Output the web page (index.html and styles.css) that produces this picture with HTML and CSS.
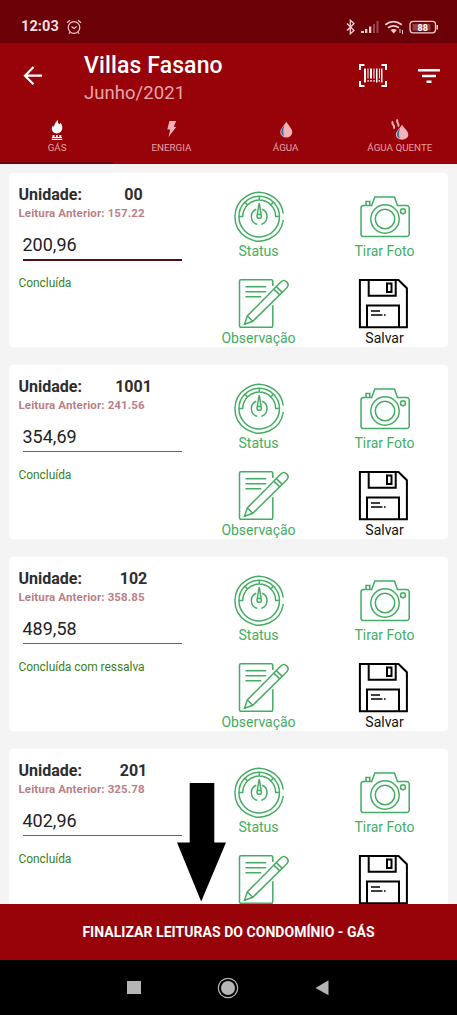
FILE: index.html
```html
<!DOCTYPE html>
<html lang="pt-BR">
<head>
<meta charset="utf-8">
<title>Villas Fasano</title>
<link rel="stylesheet" href="styles.css">
</head>
<body>
<svg class="defs" aria-hidden="true">
  <symbol id="gauge" viewBox="0 0 64 51">
    <path d="M56.300 22.500A24.300 24.300 0 1 0 56.300 29"/>
    <circle cx="32.200" cy="25.600" r="20.300"/>
    <path d="M12 25.600h3.700a16.500 16.500 0 0 1 33 0h3.700M32.200 5.500v3.600M17.900 11.300l2.600 2.600M46.500 11.300l-2.600 2.600"/>
    <path d="M29.300 18.300a8 8 0 0 0 1 15.100M35.100 18.300a8 8 0 0 1-1 15.100"/>
    <path d="M32.200 12l-2.100 12.500a2.200 2.200 0 1 0 4.200 0zM30 23.500h4.400"/>
  </symbol>
  <symbol id="camera" viewBox="0 0 64 51">
    <path d="M10.500 14.500h8.200L21.800 6h19.700l3 8.500h9.200a2.500 2.500 0 0 1 2.500 2.500v26a2.500 2.500 0 0 1-2.500 2.500H10.500A2.500 2.500 0 0 1 8 43V17a2.500 2.500 0 0 1 2.500-2.500zM13 14.500v-4h3.800v4"/>
    <circle cx="32" cy="28" r="14.200"/><circle cx="32" cy="28" r="9.700"/><circle cx="50" cy="20.200" r="2.500"/>
  </symbol>
  <symbol id="note" viewBox="0 0 64 51">
    <path d="M45.800 8V3.300a1.500 1.500 0 0 0-1.500-1.500H14a1.500 1.500 0 0 0-1.500 1.500v44.500a1.500 1.500 0 0 0 1.500 1.500h30.300a1.500 1.500 0 0 0 1.500-1.500V27.300M18.500 8.700h20.700M18.500 13.700h20.700M18.500 18.700h15.700"/>
    <path d="M17.500 46.300l2.800-8.300L53.800 4c3.800-3.800 9.800 1.500 6 5.800L25.800 43.300zM20.300 38l5.500 5.300M49.300 8.600l5.900 5.800M46.800 11.100l5.900 5.800"/>
  </symbol>
  <symbol id="floppy" viewBox="0 0 64 51">
    <path d="M6.900 2h38.600l8.400 8.200v39H6.900zM15.700 2v15.800h27V2M34 5.600h4.500v8.300H34zM14 49V27.600h32V49"/>
    <path d="M18 32.900h9M18 37h11.500M31 37h1.600" stroke-width="1.500"/>
  </symbol>
</svg>
<div class="phone">
  <div class="status-bar">
    <span class="clock">12:03</span>
    <svg class="alarm" viewBox="0 0 16 16"><circle cx="8" cy="8.500" r="5.800"/><path d="M5.500 7.500L8 9.500l2.700-2M1 3.800L4 1.300M15 3.800l-3-2.500M4 13.500l-1.200 1.200M12 13.500l1.200 1.200"/></svg>
    <svg class="signals" viewBox="0 0 94 16">
      <path class="line" d="M2 4.500l7 7-3.700 3.300V1.200L9 4.500l-7 7"/>
      <path d="M16 12h3v2h-3zM20 10h2.300v4H20zM24 7.500h2.300V14H24z"/>
      <path d="M28 5h2v9h-2zM31.500 2h2v12h-2z" opacity=".35"/>
      <path class="arc" d="M40.300 5.700q8-6 16.500 0M43 8.800q5.500-4 11 0"/>
      <path d="M45.500 11q3.200-2.200 6.400 0l-3.200 3.400zM54.500 10h1v4h-1zM57 11h1v4h-1z"/>
      <rect class="line" x="65" y="2.300" width="25.500" height="11.500" rx="3"/>
      <rect x="67.500" y="4.800" width="18" height="6.800" opacity=".3"/>
      <path d="M91.500 6h1.500v4.500h-1.500z"/>
      <text x="77.700" y="11.500">88</text>
    </svg>
  </div>
  <header class="header">
    <div class="toolbar">
      <svg class="back" viewBox="0 0 20 20"><path d="M10.500 1L2 9.700l8.500 8.500M2 9.700h17"/></svg>
      <div class="titles"><h1>Villas Fasano</h1><p>Junho/2021</p></div>
      <svg class="barcode" viewBox="0 0 28 23"><path class="line" d="M1 6V1h4.500M22.500 1H27v5M27 17v5h-4.500M5.500 22H1v-5"/><path d="M5 4.500h2v14H5zM8.500 4.500h1v10h-1zM11 4.500h2v10h-2zM14.500 4.500h1v10h-1zM17 4.500h1.500v14H17zM20 4.500h1v10h-1zM22 4.500h1.500v14H22zM8.500 16h1.200v1.800H8.500zM11.300 16h1.500v1.800h-1.500zM14.500 16h1.200v1.800h-1.200zM19.700 16h1.200v1.800h-1.200z"/></svg>
      <svg class="filter" viewBox="0 0 22 14"><path d="M0 0h22v2.500H0zM4 5.700h14v2.500H4zM8.500 11.400h5v2.500h-5z"/></svg>
    </div>
    <nav class="tabs">
      <div class="tab active"><svg viewBox="0 0 20 22"><path d="M10.500.5c1 2-.1 3.500 1.700 4.700 1-.2.8-1 1.200-1.400 1.500 2 2.500 4 1.700 6.500-.7 2.700-2.600 4.100-5.100 4.100-3 0-5.200-2-5.200-4.700 0-1.800 1-3.200 1.400-3.500.1 1 .4 1.500 1 1.700C7 4.500 9.800 3 10.500.5zM5.500 16h2v2h1.600v-2h1.600v2h1.600v-2h2v2h.7v1H4.900v-1h.6zM4.700 19.800h10.600V21H4.700z"/></svg><span>GÁS</span></div>
      <div class="tab"><svg viewBox="0 0 20 22"><path d="M8.500 2h6.700l-2.500 6h2.500L7.500 18l1.800-7.500H6.300z"/></svg><span>ENERGIA</span></div>
      <div class="tab"><svg viewBox="0 0 20 22"><path d="M10.300 2.500c2 4 6 6.800 6 10.800a6 5.200 0 0 1-12 0c0-4 4-6.800 6-10.800z"/><path class="blue" d="M8.500 6c-2 2.500-3.300 4.500-3.300 7.300 0 2 1.300 3.300 2.800 3.600-1-3.200-1-6.400.5-10.900z"/></svg><span>ÁGUA</span></div>
      <div class="tab"><svg viewBox="0 0 20 22"><path d="M12 5.500c2 4 6.300 6.200 6.300 10.200a6.200 5 0 0 1-12.400 0c0-4 4.100-6.200 6.100-10.200z"/><path class="blue" d="M10.200 9c-2 2-3.300 4-3.300 6.500 0 2 1.300 3.300 2.800 3.700-1-3.200-1-6 .5-10.200z"/><path class="steam" d="M3 2.500c-2.500 2.700 2.600 3.300.8 7.200M7.800 0.500c-2.700 2.900 2.200 3.500.3 7"/></svg><span>ÁGUA QUENTE</span></div>
    </nav>
  </header>
  <main class="list">
    <article class="card">
      <div class="reading"><div class="unit"><b>Unidade:</b><b class="number">00</b></div><p class="previous">Leitura Anterior: 157.22</p><div class="field focused">200,96</div><p class="state">Concluída</p></div>
      <div class="actions">
        <div class="action"><svg><use href="#gauge"/></svg><span>Status</span></div><div class="action"><svg><use href="#camera"/></svg><span>Tirar Foto</span></div>
        <div class="action"><svg><use href="#note"/></svg><span>Observação</span></div><div class="action save"><svg><use href="#floppy"/></svg><span>Salvar</span></div>
      </div>
    </article>
    <article class="card">
      <div class="reading"><div class="unit"><b>Unidade:</b><b class="number">1001</b></div><p class="previous">Leitura Anterior: 241.56</p><div class="field">354,69</div><p class="state">Concluída</p></div>
      <div class="actions">
        <div class="action"><svg><use href="#gauge"/></svg><span>Status</span></div><div class="action"><svg><use href="#camera"/></svg><span>Tirar Foto</span></div>
        <div class="action"><svg><use href="#note"/></svg><span>Observação</span></div><div class="action save"><svg><use href="#floppy"/></svg><span>Salvar</span></div>
      </div>
    </article>
    <article class="card">
      <div class="reading"><div class="unit"><b>Unidade:</b><b class="number">102</b></div><p class="previous">Leitura Anterior: 358.85</p><div class="field">489,58</div><p class="state">Concluída com ressalva</p></div>
      <div class="actions">
        <div class="action"><svg><use href="#gauge"/></svg><span>Status</span></div><div class="action"><svg><use href="#camera"/></svg><span>Tirar Foto</span></div>
        <div class="action"><svg><use href="#note"/></svg><span>Observação</span></div><div class="action save"><svg><use href="#floppy"/></svg><span>Salvar</span></div>
      </div>
    </article>
    <article class="card cut">
      <div class="reading"><div class="unit"><b>Unidade:</b><b class="number">201</b></div><p class="previous">Leitura Anterior: 325.78</p><div class="field">402,96</div><p class="state">Concluída</p></div>
      <div class="actions">
        <div class="action"><svg><use href="#gauge"/></svg><span>Status</span></div><div class="action"><svg><use href="#camera"/></svg><span>Tirar Foto</span></div>
        <div class="action"><svg><use href="#note"/></svg></div><div class="action save"><svg><use href="#floppy"/></svg></div>
      </div>
    </article>
    <svg class="pointer" viewBox="0 0 49 119"><path d="M12.700 0h24.600v59.500H49L24.200 118.500 0 59.500h12.700z"/></svg>
  </main>
  <div class="finish">FINALIZAR LEITURAS DO CONDOMÍNIO - GÁS</div>
  <footer class="system-nav">
    <svg viewBox="0 0 22 22"><path d="M4 4h14v13H4z"/></svg>
    <svg viewBox="0 0 22 22"><circle cx="11" cy="11" r="7"/><circle class="ring" cx="11" cy="11" r="9.700"/></svg>
    <svg viewBox="0 0 22 22"><path d="M17.500 3.300v15L4.500 11z"/></svg>
  </footer>
</div>
</body>
</html>
```
FILE: styles.css
```css
* { box-sizing: border-box; margin: 0; padding: 0; }
body { font-family: Roboto, "Liberation Sans", sans-serif; }
svg { display: block; flex: none; }
.defs { display: none; }
.phone { width: 457px; height: 1015px; display: flex; flex-direction: column; overflow: hidden; background: #f4f4f4; }

.status-bar { height: 43px; flex: none; background: #6b0007; display: flex; align-items: center; padding: 11px 18px 0 21px; color: #f8dedf; }
.clock { font-size: 14.500px; font-weight: 700; line-height: 18px; width: 45px; letter-spacing: .1px; }
.alarm { width: 16px; height: 16px; fill: none; stroke: #f0c8ca; stroke-width: 1.2; }
.signals { width: 94px; height: 16px; margin-left: auto; fill: #f2cfd1; }
.signals .line { fill: none; stroke: #f2cfd1; stroke-width: 1.3; }
.signals .arc { fill: none; stroke: #f2cfd1; stroke-width: 1.7; }
.signals text { font-size: 9px; font-weight: 700; text-anchor: middle; fill: #fff; }

.header { height: 121px; flex: none; background: #980209; color: #fff; }
.toolbar { height: 72px; display: flex; align-items: flex-start; padding: 8px 17px 0 23px; }
.back { width: 20px; height: 20px; margin-top: 15px; fill: none; stroke: #fff; stroke-width: 2.200; }
.titles { margin-left: 41px; flex: 1; }
.titles h1 { font-size: 23px; font-weight: 500; line-height: 30px; letter-spacing: .12px; }
.titles p { font-size: 18.500px; line-height: 24px; letter-spacing: .05px; color: #e8a7aa; }
.barcode { width: 28px; height: 23px; margin-top: 13px; fill: #fff; }
.barcode .line { fill: none; stroke: #fff; stroke-width: 2; }
.filter { width: 22px; height: 14px; margin: 18px 0 0 31px; fill: #fff; }
.tabs { height: 49px; display: grid; grid-template-columns: repeat(4, 1fr); }
.tab { display: flex; flex-direction: column; align-items: center; padding-top: 4px; color: #e3a3a6; fill: #f0b5b8; font-size: 9.800px; line-height: 14px; }
.tab svg { width: 20px; height: 22px; }
.tab.active { fill: #fff; border-bottom: 2px solid #650008; }
.tab .blue { fill: #3f6b99; }
.tab .steam { fill: none; stroke: #f0b5b8; stroke-width: 2; }

.list { position: relative; height: 740px; flex: none; padding: 9px; display: flex; flex-direction: column; gap: 18px; overflow: hidden; }
.card { height: 174px; flex: none; background: #fff; border-radius: 4px; display: flex; overflow: hidden; }
.card.cut { height: 155px; border-radius: 4px 4px 0 0; }
.reading { width: 186.500px; padding: 12px 14px 0 9.500px; }
.unit { display: flex; font-size: 16px; line-height: 20px; color: #2d2d2d; }
.unit b { width: 75px; }
.unit .number { width: 80px; text-align: center; }
.previous { font-size: 11.500px; font-weight: 700; line-height: 17px; letter-spacing: .12px; color: #ba8085; }
.field { width: 159px; height: 30px; margin: 8px 0 0 4px; font-size: 18px; line-height: 30px; color: #222; border-bottom: 1px solid #666; }
.field.focused { height: 31px; border-bottom: 2px solid #590b12; }
.state { margin-top: 15px; font-size: 12px; line-height: 16px; letter-spacing: -.06px; color: #407f1d; }
.focused + .state { margin-top: 14px; }
.actions { width: 252px; padding-top: 18px; display: grid; grid-template-columns: 126px 126px; grid-template-rows: 69px 69px; row-gap: 18px; }
.action { display: flex; flex-direction: column; align-items: center; font-size: 14px; line-height: 18px; color: #44ad64; stroke: #44ad64; stroke-width: 1.500; fill: none; }
.action svg { width: 64px; height: 51px; }
.save { color: #111; stroke: #000; stroke-width: 2; }
.pointer { position: absolute; left: 177px; top: 619px; width: 49px; height: 119px; fill: #000; }

.finish { height: 56px; flex: none; background: #980209; color: #fff; font-size: 14px; font-weight: 700; line-height: 57px; letter-spacing: .04px; text-align: center; }
.system-nav { height: 55px; flex: none; background: #000; display: flex; justify-content: center; align-items: center; gap: 72px; padding-right: 2px; fill: #b5b5b5; }
.system-nav svg { width: 22px; height: 22px; }
.system-nav .ring { fill: none; stroke: #b5b5b5; stroke-width: 1.200; }
```
